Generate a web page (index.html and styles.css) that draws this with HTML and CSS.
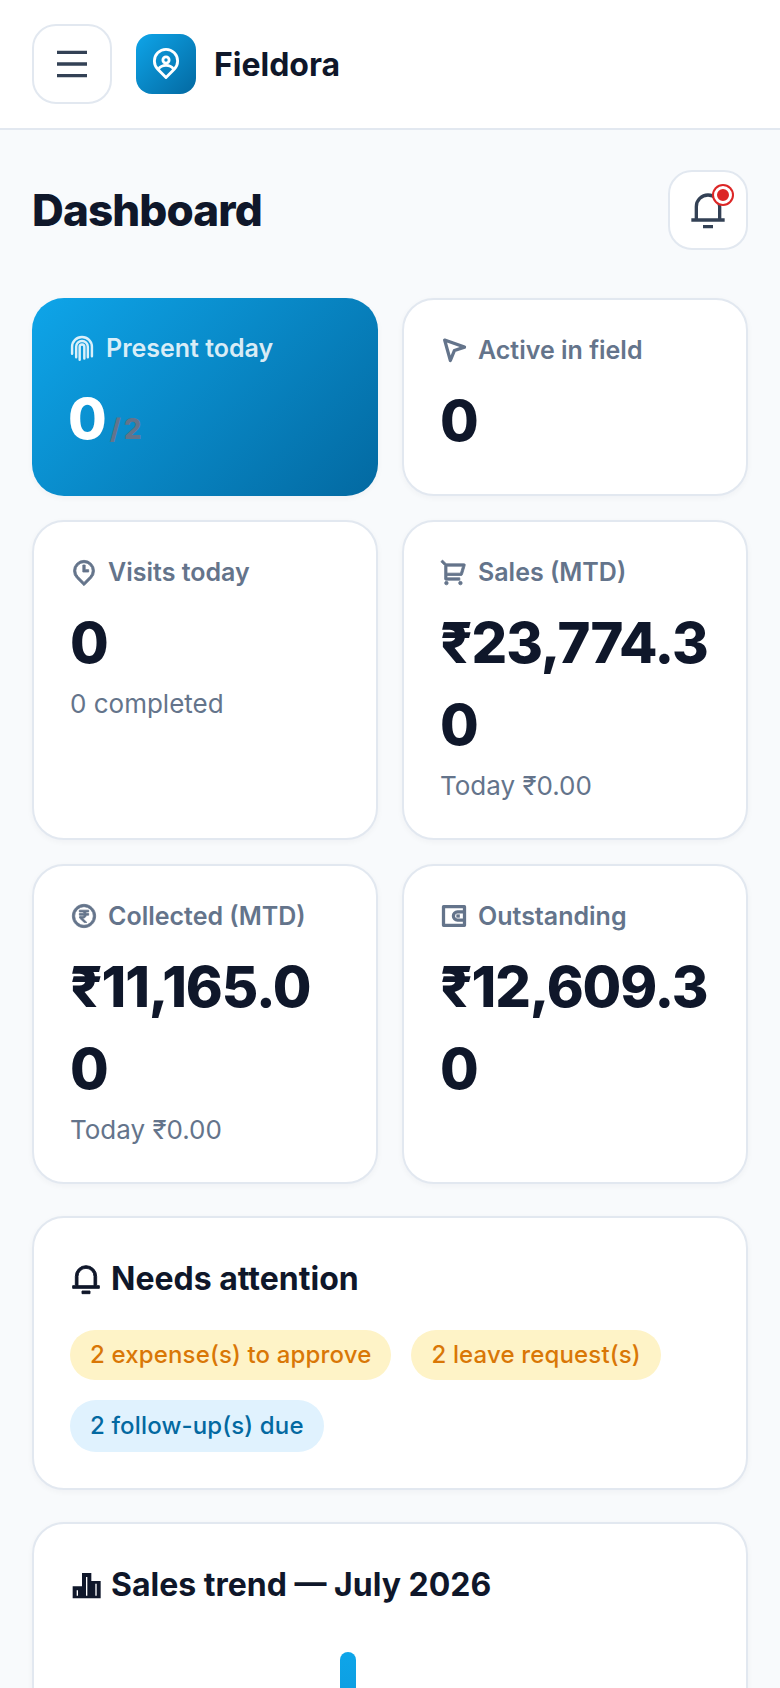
FILE: index.html
```html
<!DOCTYPE html>
<html lang="en">
<head>
    <meta charset="UTF-8">
    <meta name="viewport" content="width=device-width, initial-scale=1.0">
    <title>Fieldora Dashboard</title>
    <link rel="stylesheet" href="styles.css">
</head>
<body>
    <header class="topbar">
        <button class="icon-btn" type="button" aria-label="Menu">
            <svg class="icon-menu" viewBox="0 0 24 24"><path d="M3 4h18v2H3zM3 11h18v2H3zM3 18h18v2H3z"/></svg>
        </button>
        <div class="brand-mark">
            <svg viewBox="0 0 24 24" fill="none" stroke="#fff" stroke-width="2">
                <path d="M12 21.500 6.200 15.700a8.200 8.200 0 1 1 11.600 0z" stroke-linejoin="round"/>
                <circle cx="12" cy="9.200" r="2.200"/>
                <path d="M6.600 15.800c1.100-1.800 3-2.800 5.400-2.800s4.300 1 5.400 2.800"/>
            </svg>
        </div>
        <span class="brand-name">Fieldora</span>
    </header>

    <main class="content">
        <div class="page-head">
            <h1>Dashboard</h1>
            <button class="icon-btn bell-btn" type="button" aria-label="Notifications">
                <svg class="icon-bell" viewBox="0 0 24 24"><path d="M20 17h2v2H2v-2h2v-7a8 8 0 1 1 16 0v7zm-2 0v-7a6 6 0 1 0-12 0v7h12zm-9 4h6v2H9v-2z"/></svg>
                <span class="bell-dot"></span>
            </button>
        </div>

        <div class="stats">
            <div class="stat stat-primary">
                <div class="stat-label">
                    <svg viewBox="0 0 24 24" fill="none" stroke="currentColor" stroke-width="2.100" stroke-linecap="round">
                        <path d="M3.500 17v-6a8.500 8.500 0 0 1 17 0v8"/>
                        <path d="M7 20v-9a5 5 0 0 1 10 0v9"/>
                        <path d="M10 22v-11a2 2 0 0 1 4 0v10"/>
                    </svg>
                    Present today
                </div>
                <div class="stat-value">0<small>/ 2</small></div>
            </div>
            <div class="stat">
                <div class="stat-label">
                    <svg viewBox="0 0 24 24" fill="none" stroke="currentColor" stroke-width="2.800" stroke-linejoin="round"><path d="M4 3.500 21 9.500l-8.600 2.900L8.900 21z"/></svg>
                    Active in field
                </div>
                <div class="stat-value">0</div>
            </div>
            <div class="stat">
                <div class="stat-label">
                    <svg class="thick" viewBox="0 0 24 24"><path d="M12 23.728l-6.364-6.364a9 9 0 1 1 12.728 0L12 23.728zm4.950-7.778a7 7 0 1 0-9.900 0L12 20.900l4.950-4.950zM13 10h3v2h-5V6h2v4z"/></svg>
                    Visits today
                </div>
                <div class="stat-value">0</div>
                <div class="stat-sub">0 completed</div>
            </div>
            <div class="stat">
                <div class="stat-label">
                    <svg class="thick" viewBox="0 0 24 24"><path d="M4 6.414L.757 3.172l1.415-1.415L5.414 5h15.242a1 1 0 0 1 .958 1.287l-2.400 8a1 1 0 0 1-.958.713H6v2h11v2H5a1 1 0 0 1-1-1V6.414zM6 7v6h11.512l1.800-6H6zm-.500 16a1.500 1.500 0 1 1 0-3 1.500 1.500 0 0 1 0 3zm12 0a1.500 1.500 0 1 1 0-3 1.500 1.500 0 0 1 0 3z"/></svg>
                    Sales (MTD)
                </div>
                <div class="stat-value">₹23,774.30</div>
                <div class="stat-sub">Today ₹0.00</div>
            </div>
            <div class="stat">
                <div class="stat-label">
                    <svg class="thick" viewBox="0 0 24 24"><path d="M12 22C6.477 22 2 17.523 2 12S6.477 2 12 2s10 4.477 10 10-4.477 10-10 10zm0-2a8 8 0 1 0 0-16 8 8 0 0 0 0 16zM8 7h8v1.500h-2.600c.3.4.5.8.6 1.300h2v1.500h-2c-.3 1.600-1.500 2.600-3.200 2.700l3.600 3.500h-2.200L8.200 13.800v-1.300h1.900c1.100 0 1.900-.5 2.200-1.200H8V9.800h4.300c-.3-.8-1.100-1.300-2.200-1.300H8z"/></svg>
                    Collected (MTD)
                </div>
                <div class="stat-value">₹11,165.00</div>
                <div class="stat-sub">Today ₹0.00</div>
            </div>
            <div class="stat">
                <div class="stat-label">
                    <svg viewBox="0 0 24 24" fill="none" stroke="currentColor" stroke-width="2.800"><path d="M3 4h18v16H3z" stroke-linejoin="round"/><path d="M21 8.500h-6a3.500 3.500 0 1 0 0 7h6"/><path d="M14 12h3"/></svg>
                    Outstanding
                </div>
                <div class="stat-value">₹12,609.30</div>
            </div>
        </div>

        <section class="panel">
            <h2>
                <svg class="thick" viewBox="0 0 24 24"><path d="M20 17h2v2H2v-2h2v-7a8 8 0 1 1 16 0v7zm-2 0v-7a6 6 0 1 0-12 0v7h12zm-9 4h6v2H9v-2z"/></svg>
                Needs attention
            </h2>
            <div class="pills">
                <span class="pill pill-warn">2 expense(s) to approve</span>
                <span class="pill pill-warn">2 leave request(s)</span>
                <span class="pill pill-info">2 follow-up(s) due</span>
            </div>
        </section>

        <section class="panel">
            <h2>
                <svg viewBox="0 0 24 24"><path fill="currentColor" fill-rule="evenodd" d="M9 3h7v6h7v13H2V13h7zM5 16v4h1v-4zM12 6v14h1V6zM19 11v9h1v-9z"/></svg>
                Sales trend — July 2026
            </h2>
            <div class="chart">
                <div class="bar"></div>
            </div>
        </section>
    </main>
</body>
</html>
```

FILE: styles.css
```css
:root {
    --ink: #0f172a;
    --muted: #64748b;
    --line: #e2e8f0;
    --brand: #0ea5e9;
    --brand-dark: #0369a1;
}

* {
    box-sizing: border-box;
}

html, body {
    height: 1688px;
    overflow: hidden;
}

body {
    margin: 0;
    background-color: #f8fafc;
    color: var(--ink);
    font-family: 'Inter', sans-serif;
}

.topbar {
    display: flex;
    align-items: center;
    height: 130px;
    padding: 0 32px;
    background-color: white;
    border-bottom: 2px solid var(--line);
}

.icon-btn {
    display: flex;
    align-items: center;
    justify-content: center;
    width: 80px;
    height: 80px;
    padding: 0;
    background-color: white;
    border: 2px solid var(--line);
    border-radius: 24px;
}

.icon-menu {
    width: 40px;
    height: 40px;
    fill: #334155;
}

.brand-mark {
    display: flex;
    align-items: center;
    justify-content: center;
    width: 60px;
    height: 60px;
    margin-left: 24px;
    border-radius: 16px;
    background: linear-gradient(135deg, var(--brand), var(--brand-dark));
}

.brand-mark svg {
    width: 34px;
    height: 34px;
}

.brand-name {
    margin-left: 18px;
    font-size: 32px;
    font-weight: 700;
}

.content {
    padding: 40px 32px 0;
}

.page-head {
    display: flex;
    align-items: center;
    justify-content: space-between;
    margin-bottom: 48px;
}

h1 {
    margin: 0;
    font-size: 44px;
    font-weight: 800;
    letter-spacing: -0.02em;
}

.bell-btn {
    position: relative;
}

.icon-bell {
    width: 40px;
    height: 40px;
    fill: #334155;
}

.bell-dot {
    position: absolute;
    top: 14px;
    right: 14px;
    width: 18px;
    height: 18px;
    background-color: #dc2626;
    border: 3px solid white;
    border-radius: 50%;
    box-shadow: 0 0 0 2px #dc2626;
}

.stats {
    display: grid;
    grid-template-columns: 1fr 1fr;
    gap: 24px;
    margin-bottom: 32px;
}

.stat {
    min-width: 0;
    padding: 32px 36px;
    background-color: white;
    border: 2px solid var(--line);
    border-radius: 32px;
    box-shadow: 0 2px 6px rgba(15, 23, 42, 0.04);
}

.stat-label {
    display: flex;
    align-items: center;
    gap: 10px;
    height: 35px;
    color: var(--muted);
    font-size: 25px;
    font-weight: 600;
}

.stat-label svg {
    width: 28px;
    height: 28px;
    flex-shrink: 0;
}

.thick {
    fill: currentColor;
    stroke: currentColor;
    stroke-width: 0.7;
}

.stat-value {
    margin-top: 13px;
    font-size: 56px;
    font-weight: 800;
    line-height: 82px;
    letter-spacing: -0.02em;
    overflow-wrap: anywhere;
}

.stat-value small {
    margin-left: 4px;
    color: var(--muted);
    font-size: 28px;
    font-weight: 800;
    line-height: 1;
    word-spacing: -1px;
}

.stat-sub {
    color: var(--muted);
    font-size: 26px;
    line-height: 40px;
}

.stat-primary {
    background: linear-gradient(135deg, var(--brand), var(--brand-dark));
    border: none;
}

.stat-primary .stat-label {
    color: rgba(255, 255, 255, 0.85);
}

.stat-primary .stat-value {
    color: white;
}

.panel {
    margin-bottom: 32px;
    padding: 40px 36px 36px;
    background-color: white;
    border: 2px solid var(--line);
    border-radius: 32px;
    box-shadow: 0 2px 6px rgba(15, 23, 42, 0.04);
}

h2 {
    display: flex;
    align-items: center;
    gap: 9px;
    margin: 0 0 30px;
    font-size: 32px;
    font-weight: 700;
    line-height: 42px;
}

h2 svg {
    width: 32px;
    height: 32px;
    flex-shrink: 0;
}

.pills {
    display: flex;
    flex-wrap: wrap;
    gap: 20px;
}

.pill {
    padding: 9px 20px;
    border-radius: 999px;
    font-size: 24px;
    font-weight: 500;
    letter-spacing: 0.15px;
    line-height: 32px;
}

.pill-warn {
    background-color: #fef3c7;
    color: #d97706;
}

.pill-info {
    padding: 10px 20px;
    background-color: #e0f2fe;
    color: var(--brand-dark);
}

.chart {
    display: grid;
    grid-template-columns: repeat(31, 1fr);
    column-gap: 5px;
    height: 400px;
    margin-top: 46px;
}

.bar {
    grid-column: 14;
    border-radius: 8px 8px 0 0;
    background: linear-gradient(180deg, var(--brand), var(--brand-dark));
}
```
